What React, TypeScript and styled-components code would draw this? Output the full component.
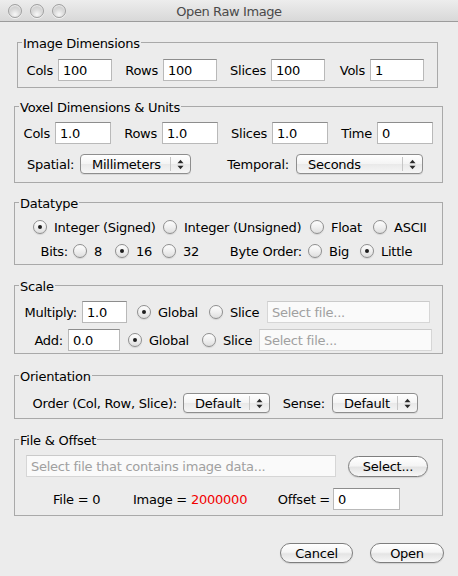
import React from "react";
import styled, { createGlobalStyle } from "styled-components";

const Global = createGlobalStyle`
  html, body { margin: 0; padding: 0; background: #ececec; }
  body {
    font-family: "DejaVu Sans", "Liberation Sans", sans-serif;
    font-size: 13px;
    letter-spacing: -0.25px;
    color: #000;
  }
  * { box-sizing: border-box; }
`;

const Window = styled.div`
  width: 458px;
  height: 576px;
  background: #ececec;
  display: flex;
  flex-direction: column;
  overflow: hidden;
`;

const TitleBar = styled.div`
  height: 22px;
  flex: none;
  display: grid;
  grid-template-columns: 1fr auto 1fr;
  align-items: center;
  background: linear-gradient(#ededed, #d8d8d8);
  border-bottom: 1px solid #9c9c9c;
`;

const Lights = styled.div`
  display: flex;
  gap: 8px;
  padding-left: 8px;
`;

const Light = styled.span`
  width: 14px;
  height: 14px;
  border-radius: 50%;
  border: 1px solid #a0a0a0;
  background: radial-gradient(circle at 50% 78%, #f8f8f8 0%, #dadada 45%, #c3c3c3 100%);
  box-shadow: inset 0 1px 1px rgba(255, 255, 255, 0.7), 0 1px 0 rgba(255, 255, 255, 0.6);
`;

const Title = styled.div`
  color: #4a4a4a;
  letter-spacing: -0.4px;
  padding-top: 1px;
`;

const Content = styled.div`
  display: flex;
  flex-direction: column;
  padding-top: 20px;
`;

const Panel = styled.section<{ $narrow?: boolean; $mt?: number; $pt: number; $pb: number; $gap?: number }>`
  position: relative;
  margin: ${(p) => p.$mt ?? 0}px ${(p) => (p.$narrow ? 20 : 15)}px 0 ${(p) => (p.$narrow ? 17 : 14)}px;
  border: 1px solid #a9a9a9;
  padding: ${(p) => p.$pt}px 0 ${(p) => p.$pb}px;
  display: flex;
  flex-direction: column;
  gap: ${(p) => p.$gap ?? 0}px;
`;

const Legend = styled.span`
  position: absolute;
  top: -7px;
  left: 4px;
  padding: 0 1px;
  background: #ececec;
  line-height: 16px;
  white-space: nowrap;
`;

const Row = styled.div<{ $pl: number; $h?: number }>`
  display: flex;
  align-items: center;
  padding-left: ${(p) => p.$pl}px;
  height: ${(p) => p.$h ?? 22}px;
`;

const Label = styled.span<{ $w: number; $pr?: number; $align?: string }>`
  flex: none;
  width: ${(p) => p.$w}px;
  padding-right: ${(p) => p.$pr ?? 5}px;
  text-align: ${(p) => p.$align ?? "right"};
  white-space: nowrap;
`;

const Text = styled.span<{ $w?: number; $red?: boolean }>`
  flex: none;
  width: ${(p) => (p.$w ? `${p.$w}px` : "auto")};
  color: ${(p) => (p.$red ? "#f20000" : "#000")};
  white-space: nowrap;
`;

const Field = styled.input<{ $w: number; $muted?: boolean; $ml?: number }>`
  flex: none;
  width: ${(p) => p.$w}px;
  height: 22px;
  margin: 0 0 0 ${(p) => p.$ml ?? 0}px;
  padding: 0 4px;
  border: 1px solid ${(p) => (p.$muted ? "#d6d6d6" : "#b9b9b9")};
  border-top-color: ${(p) => (p.$muted ? "#cacaca" : "#8d8d8d")};
  background: ${(p) => (p.$muted ? "#fafafa" : "#fff")};
  font: inherit;
  letter-spacing: inherit;
  color: #000;
  outline: none;
  &::placeholder {
    color: #a0a0a0;
  }
`;

const RadioOpt = styled.span<{ $w?: number; $ml?: number }>`
  flex: none;
  display: flex;
  align-items: center;
  gap: 7px;
  width: ${(p) => (p.$w ? `${p.$w}px` : "auto")};
  margin-left: ${(p) => p.$ml ?? 0}px;
  white-space: nowrap;
`;

const RadioDot = styled.span<{ $on?: boolean }>`
  flex: none;
  width: 14px;
  height: 14px;
  border-radius: 50%;
  border: 1px solid #8f8f8f;
  background: linear-gradient(#fdfdfd, #f0f0f0 50%, #dedede);
  box-shadow: 0 1px 1px rgba(0, 0, 0, 0.1);
  display: flex;
  align-items: center;
  justify-content: center;
  &::after {
    content: "";
    display: ${(p) => (p.$on ? "block" : "none")};
    width: 4px;
    height: 4px;
    border-radius: 50%;
    background: #1e1e1e;
  }
`;

const Popup = styled.div<{ $w: number }>`
  flex: none;
  display: flex;
  align-items: stretch;
  width: ${(p) => p.$w}px;
  height: 20px;
  border: 1px solid #8e8e8e;
  border-radius: 4px;
  background: linear-gradient(#ffffff, #f4f4f4 50%, #e9e9e9 52%, #f6f6f6);
  box-shadow: 0 1px 0 rgba(0, 0, 0, 0.08);
`;

const PopupText = styled.span`
  flex: 1;
  display: flex;
  align-items: center;
  padding-left: 11px;
  white-space: nowrap;
`;

const PopupArrows = styled.span`
  flex: none;
  width: 20px;
  margin: 2px 0;
  display: flex;
  align-items: center;
  justify-content: center;
  border-left: 1px solid #c6c6c6;
`;

const PushButton = styled.button<{ $w: number; $h?: number; $ml?: number }>`
  flex: none;
  width: ${(p) => p.$w}px;
  height: ${(p) => p.$h ?? 20}px;
  margin: 0 0 0 ${(p) => p.$ml ?? 0}px;
  padding: 0;
  border-radius: 11px;
  border: 1px solid #7e7e7e;
  background: linear-gradient(#ffffff, #f5f5f5 45%, #e4e4e4 55%, #f7f7f7);
  box-shadow: 0 1px 1px rgba(0, 0, 0, 0.12);
  font: inherit;
  letter-spacing: inherit;
  color: #000;
`;

const ButtonBar = styled.div`
  display: flex;
  justify-content: flex-end;
  gap: 17px;
  margin-top: 27px;
  padding-right: 14px;
`;

const Arrows = () => (
  <svg width="7" height="11" viewBox="0 0 7 11">
    <path d="M0.5 4.2 L3.5 0.8 L6.5 4.2 Z" fill="#2a2a2a" />
    <path d="M0.5 6.8 L3.5 10.2 L6.5 6.8 Z" fill="#2a2a2a" />
  </svg>
);

const Select = ({ w, value }: { w: number; value: string }) => (
  <Popup $w={w}>
    <PopupText>{value}</PopupText>
    <PopupArrows>
      <Arrows />
    </PopupArrows>
  </Popup>
);

const Radio = ({ label, on, w, ml }: { label: string; on?: boolean; w?: number; ml?: number }) => (
  <RadioOpt $w={w} $ml={ml}>
    <RadioDot $on={on} />
    {label}
  </RadioOpt>
);

export default function App() {
  return (
    <>
      <Global />
      <Window>
        <TitleBar>
          <Lights>
            <Light />
            <Light />
            <Light />
          </Lights>
          <Title>Open Raw Image</Title>
          <span />
        </TitleBar>
        <Content>
          <Panel $narrow $pt={16} $pb={6}>
            <Legend>Image Dimensions</Legend>
            <Row $pl={7}>
              <Label $w={33}>Cols</Label>
              <Field $w={54} defaultValue="100" />
              <Label $w={51}>Rows</Label>
              <Field $w={54} defaultValue="100" />
              <Label $w={54}>Slices</Label>
              <Field $w={54} defaultValue="100" />
              <Label $w={45}>Vols</Label>
              <Field $w={54} defaultValue="1" />
            </Row>
          </Panel>

          <Panel $mt={18} $pt={15} $pb={8} $gap={10}>
            <Legend>Voxel Dimensions &amp; Units</Legend>
            <Row $pl={8}>
              <Label $w={32}>Cols</Label>
              <Field $w={56} defaultValue="1.0" />
              <Label $w={51}>Rows</Label>
              <Field $w={56} defaultValue="1.0" />
              <Label $w={54}>Slices</Label>
              <Field $w={56} defaultValue="1.0" />
              <Label $w={49}>Time</Label>
              <Field $w={56} defaultValue="0" />
            </Row>
            <Row $pl={12} $h={20}>
              <Label $w={53} $pr={7}>Spatial:</Label>
              <Select w={111} value="Millimeters" />
              <Label $w={105} $pr={7}>Temporal:</Label>
              <Select w={127} value="Seconds" />
            </Row>
          </Panel>

          <Panel $mt={19} $pt={15} $pb={4} $gap={6}>
            <Legend>Datatype</Legend>
            <Row $pl={18} $h={18}>
              <Radio on label="Integer (Signed)" w={130} />
              <Radio label="Integer (Unsigned)" w={147} />
              <Radio label="Float" w={63} />
              <Radio label="ASCII" />
            </Row>
            <Row $pl={25} $h={18}>
              <Label $w={33}>Bits:</Label>
              <Radio label="8" w={42} />
              <Radio on label="16" w={47} />
              <Radio label="32" w={50} />
              <Label $w={96} $pr={6}>Byte Order:</Label>
              <Radio label="Big" w={52} />
              <Radio on label="Little" />
            </Row>
          </Panel>

          <Panel $mt={20} $pt={15} $pb={2} $gap={6}>
            <Legend>Scale</Legend>
            <Row $pl={8}>
              <Label $w={59}>Multiply:</Label>
              <Field $w={45} defaultValue="1.0" />
              <Radio on label="Global" w={72} ml={10} />
              <Radio label="Slice" w={58} />
              <Field $w={163} $muted placeholder="Select file..." />
            </Row>
            <Row $pl={18}>
              <Label $w={35}>Add:</Label>
              <Field $w={52} defaultValue="0.0" />
              <Radio on label="Global" w={74} ml={8} />
              <Radio label="Slice" w={57} />
              <Field $w={173} $muted placeholder="Select file..." />
            </Row>
          </Panel>

          <Panel $mt={21} $pt={17} $pb={5}>
            <Legend>Orientation</Legend>
            <Row $pl={14} $h={20}>
              <Label $w={154} $pr={6}>Order (Col, Row, Slice):</Label>
              <Select w={87} value="Default" />
              <Label $w={62} $pr={7}>Sense:</Label>
              <Select w={86} value="Default" />
            </Row>
          </Panel>

          <Panel $mt={20} $pt={15} $pb={5} $gap={11}>
            <Legend>File &amp; Offset</Legend>
            <Row $pl={11}>
              <Field $w={310} $muted placeholder="Select file that contains image data..." />
              <PushButton $w={80} $h={21} $ml={12}>Select...</PushButton>
            </Row>
            <Row $pl={38}>
              <Text $w={80}>File = 0</Text>
              <Text $w={58}>Image = </Text>
              <Text $w={86} $red>2000000</Text>
              <Label $w={56} $pr={3}>Offset =</Label>
              <Field $w={67} defaultValue="0" />
            </Row>
          </Panel>

          <ButtonBar>
            <PushButton $w={73}>Cancel</PushButton>
            <PushButton $w={74}>Open</PushButton>
          </ButtonBar>
        </Content>
      </Window>
    </>
  );
}
